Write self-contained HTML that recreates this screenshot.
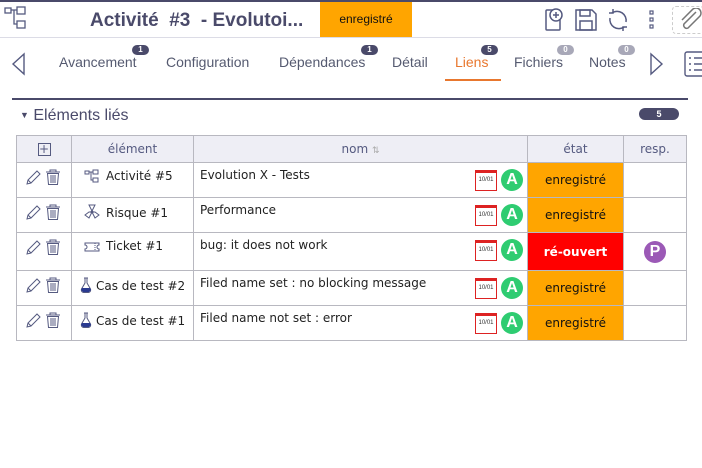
<!DOCTYPE html>
<html><head><meta charset="utf-8"><style>
*{margin:0;padding:0;box-sizing:border-box}
body{width:702px;height:468px;background:#fff;font-family:"Liberation Sans","DejaVu Sans",sans-serif;position:relative;overflow:hidden;color:#222}
.a{position:absolute}
.tab{position:absolute;top:54px;font-size:14px;color:#555a70}
.bd{position:absolute;top:45px;height:10px;border-radius:5px;font-size:8px;color:#fff;text-align:center;line-height:10px;font-weight:bold}
table{position:absolute;left:16px;top:135px;border-collapse:collapse;font-family:"DejaVu Sans",sans-serif;font-size:12px}
td,th{border:1px solid #b8b8c0;padding:0}
th{background:#eeeef5;color:#555a80;font-weight:normal;height:27px;font-size:12px}
td{height:35px;vertical-align:top}
.st{background:#ffa500;text-align:center;vertical-align:middle;font-size:12px;color:#111}
.av{display:inline-block;width:22px;height:22px;border-radius:11px;background:#2ecc71;color:#fff;font-size:16px;font-weight:bold;text-align:center;line-height:22px;font-family:"Liberation Sans",sans-serif;vertical-align:middle}
.cal{display:inline-block;width:22px;height:21px;border:1px solid #d22;border-top:3px solid #d22;font-size:6px;color:#333;text-align:center;line-height:15px;vertical-align:middle;margin-right:4px;font-family:"Liberation Sans",sans-serif}
.nm{position:relative;padding:5px 6px}
.ic{position:absolute;right:4px;top:6px}
.ac{padding:6px 0 0 8px}
.el{padding:6px 0 0 8px;white-space:nowrap}
.el svg{vertical-align:-3px;margin-right:6px}
</style></head><body>
<svg width="0" height="0" style="position:absolute"><defs>
<g id="pen" fill="none" stroke="#555a80" stroke-width="1"><path d="M2 15l1-4 9-9 3 3-9 9z M3 11l3 3"/></g>
<g id="trash" fill="none" stroke="#555a80" stroke-width="1"><path d="M1 3h14M5 3V1h6v2M2.5 4.5h11l-1 11h-9z"/><path d="M6 6v8M8 6v8M10 6v8"/></g>
</defs></svg>
<div class="a" style="left:0;top:0;width:702px;height:2px;background:#4a4a6a"></div>
<div class="a" style="left:0;top:37px;width:702px;height:1px;background:#dcdce6"></div>
<svg class="a" style="left:4px;top:6px" width="24" height="26" viewBox="0 0 24 26" fill="none" stroke="#555a80" stroke-width="1.3"><rect x="1" y="2" width="6" height="5"/><rect x="13" y="1" width="8" height="7"/><rect x="13" y="15" width="8" height="7"/><path d="M7 4h6M10 4v14h3"/></svg>
<div class="a" style="left:90px;top:10px;font-size:19px;font-weight:bold;color:#4a4a6a">Activité&nbsp; #3&nbsp; - Evolutoi...</div>
<div class="a" style="left:320px;top:2px;width:92px;height:35px;background:#ffa500;font-size:12px;text-align:center;line-height:35px;color:#111">enregistré</div>
<svg class="a" style="left:543px;top:7px" width="24" height="26" fill="none" stroke="#555a80" stroke-width="1.5"><rect x="3" y="3" width="14" height="20" rx="1"/><circle cx="13" cy="8" r="6" fill="#fff"/><path d="M13 5v6M10 8h6"/></svg>
<svg class="a" style="left:574px;top:8px" width="24" height="24" fill="none" stroke="#555a80" stroke-width="1.5"><path d="M2 2h16l4 4v16H2z"/><rect x="6" y="2" width="10" height="6"/><rect x="6" y="13" width="12" height="9"/></svg>
<svg class="a" style="left:606px;top:8px" width="24" height="24" fill="none" stroke="#555a80" stroke-width="1.5"><path d="M6 5a9 9 0 0 1 14 9M18 19a9 9 0 0 1-14-9"/><path d="M3 5h4V1M21 19h-4v4"/></svg>
<svg class="a" style="left:648px;top:10px" width="8" height="22" fill="none" stroke="#555a80" stroke-width="1.2"><rect x="2" y="1" width="3" height="3"/><rect x="2" y="8" width="3" height="3"/><rect x="2" y="15" width="3" height="3"/></svg>
<div class="a" style="left:672px;top:6px;width:32px;height:28px;border:1px dashed #ccc;border-radius:4px"></div>
<svg class="a" style="left:678px;top:8px" width="24" height="24" fill="none" stroke="#777" stroke-width="1.5"><path d="M18 4l-12 12a3 3 0 0 0 4 4l12-12a5 5 0 0 0-7-7L4 12"/></svg>
<svg class="a" style="left:10px;top:52px" width="16" height="24" fill="none" stroke="#555a80" stroke-width="1.4"><path d="M14 2L3 12l11 10z"/></svg>
<svg class="a" style="left:649px;top:52px" width="16" height="24" fill="none" stroke="#555a80" stroke-width="1.4"><path d="M2 2l11 10L2 22z"/></svg>
<svg class="a" style="left:684px;top:51px" width="20" height="26" fill="none" stroke="#555a80" stroke-width="1.4"><rect x="1" y="1" width="22" height="24" rx="2"/><path d="M5 7h2M5 13h2M5 19h2M10 7h12M10 13h12M10 19h12"/></svg>
<div class="tab" style="left:59px">Avancement</div>
<div class="tab" style="left:166px">Configuration</div>
<div class="tab" style="left:279px">Dépendances</div>
<div class="tab" style="left:392px">Détail</div>
<div class="tab" style="left:455px;color:#e8772e">Liens</div>
<div class="tab" style="left:514px">Fichiers</div>
<div class="tab" style="left:589px">Notes</div>
<div class="bd" style="left:132px;width:17px;background:#4a4a6a">1</div>
<div class="bd" style="left:361px;width:17px;background:#4a4a6a">1</div>
<div class="bd" style="left:481px;width:17px;background:#4a4a6a">5</div>
<div class="bd" style="left:557px;width:17px;background:#a8a8b8">0</div>
<div class="bd" style="left:618px;width:17px;background:#a8a8b8">0</div>
<div class="a" style="left:445px;top:79px;width:56px;height:2px;background:#e8772e"></div>
<div class="a" style="left:12px;top:98px;width:676px;height:2px;background:#4a4a6a"></div>
<div class="a" style="left:20px;top:107px;font-size:16px;color:#4a4a6a"><span style="font-size:9px;vertical-align:2px">▼</span> Eléments liés</div>
<div class="a" style="left:639px;top:108px;width:40px;height:12px;border-radius:6px;background:#4a4a6a;color:#fff;font-size:9px;font-weight:bold;text-align:center;line-height:12px">5</div>
<table>
<tr><th style="width:55px"><span style="display:inline-block;width:13px;height:13px;border:1px solid #555a80;font-size:12px;line-height:10px;color:#555a80">+</span></th><th style="width:122px">élément</th><th style="width:334px">nom <span style="font-size:9px;color:#aaa">⇅</span></th><th style="width:96px">état</th><th style="width:63px">resp.</th></tr>
<tr><td class="ac"><svg width="16" height="17"><use href="#pen"/></svg> <svg width="16" height="17"><use href="#trash"/></svg></td><td class="el" style="padding-left:12px"><svg width="16" height="14" fill="none" stroke="#555a80" stroke-width="1"><rect x="1" y="2" width="4" height="3"/><rect x="9" y="1" width="5" height="4"/><rect x="9" y="9" width="5" height="4"/><path d="M5 3h4M7 3v8h2"/></svg>Activité #5</td><td class="nm">Evolution X - Tests<span class="ic"><span class="cal">10/01</span><span class="av">A</span></span></td><td class="st">enregistré</td><td></td></tr>
<tr><td class="ac"><svg width="16" height="17"><use href="#pen"/></svg> <svg width="16" height="17"><use href="#trash"/></svg></td><td class="el" style="padding-left:12px"><svg width="16" height="16" fill="none" stroke="#555a80" stroke-width="1"><path d="M5 1h6L8 7zM1 11l4-3 3 0-3 6zM15 11l-4-3-3 0 3 6z"/><circle cx="8" cy="8" r="1"/></svg>Risque #1</td><td class="nm">Performance<span class="ic"><span class="cal">10/01</span><span class="av">A</span></span></td><td class="st">enregistré</td><td></td></tr>
<tr><td class="ac" style="height:38px"><svg width="16" height="17"><use href="#pen"/></svg> <svg width="16" height="17"><use href="#trash"/></svg></td><td class="el" style="padding-left:12px"><svg width="16" height="12" fill="none" stroke="#555a80" stroke-width="1"><path d="M1 2h14v2a2 2 0 0 0 0 4v2H1V8a2 2 0 0 0 0-4z"/><path d="M11 2v8" stroke-dasharray="1 1"/></svg>Ticket #1</td><td class="nm">bug: it does not work<span class="ic"><span class="cal">10/01</span><span class="av">A</span></span></td><td class="st" style="background:#f00;color:#fff;font-weight:bold">ré-ouvert</td><td style="text-align:center;vertical-align:middle"><span class="av" style="background:#9b59b6">P</span></td></tr>
<tr><td class="ac"><svg width="16" height="17"><use href="#pen"/></svg> <svg width="16" height="17"><use href="#trash"/></svg></td><td class="el"><svg width="12" height="16" style="margin-right:4px" stroke="#555a80" stroke-width="1"><path d="M4 1h4M5 1v5L1.5 12a2.5 2.5 0 0 0 2 3.5h5a2.5 2.5 0 0 0 2-3.5L7 6V1" fill="none"/><path d="M2 11h8l1 2-2 2H3l-2-2z" fill="#2a3a90" stroke="none"/></svg>Cas de test #2</td><td class="nm">Filed name set : no blocking message<span class="ic"><span class="cal">10/01</span><span class="av">A</span></span></td><td class="st">enregistré</td><td></td></tr>
<tr><td class="ac"><svg width="16" height="17"><use href="#pen"/></svg> <svg width="16" height="17"><use href="#trash"/></svg></td><td class="el"><svg width="12" height="16" style="margin-right:4px" stroke="#555a80" stroke-width="1"><path d="M4 1h4M5 1v5L1.5 12a2.5 2.5 0 0 0 2 3.5h5a2.5 2.5 0 0 0 2-3.5L7 6V1" fill="none"/><path d="M2 11h8l1 2-2 2H3l-2-2z" fill="#2a3a90" stroke="none"/></svg>Cas de test #1</td><td class="nm">Filed name not set : error<span class="ic"><span class="cal">10/01</span><span class="av">A</span></span></td><td class="st">enregistré</td><td></td></tr>
</table>
</body></html>
